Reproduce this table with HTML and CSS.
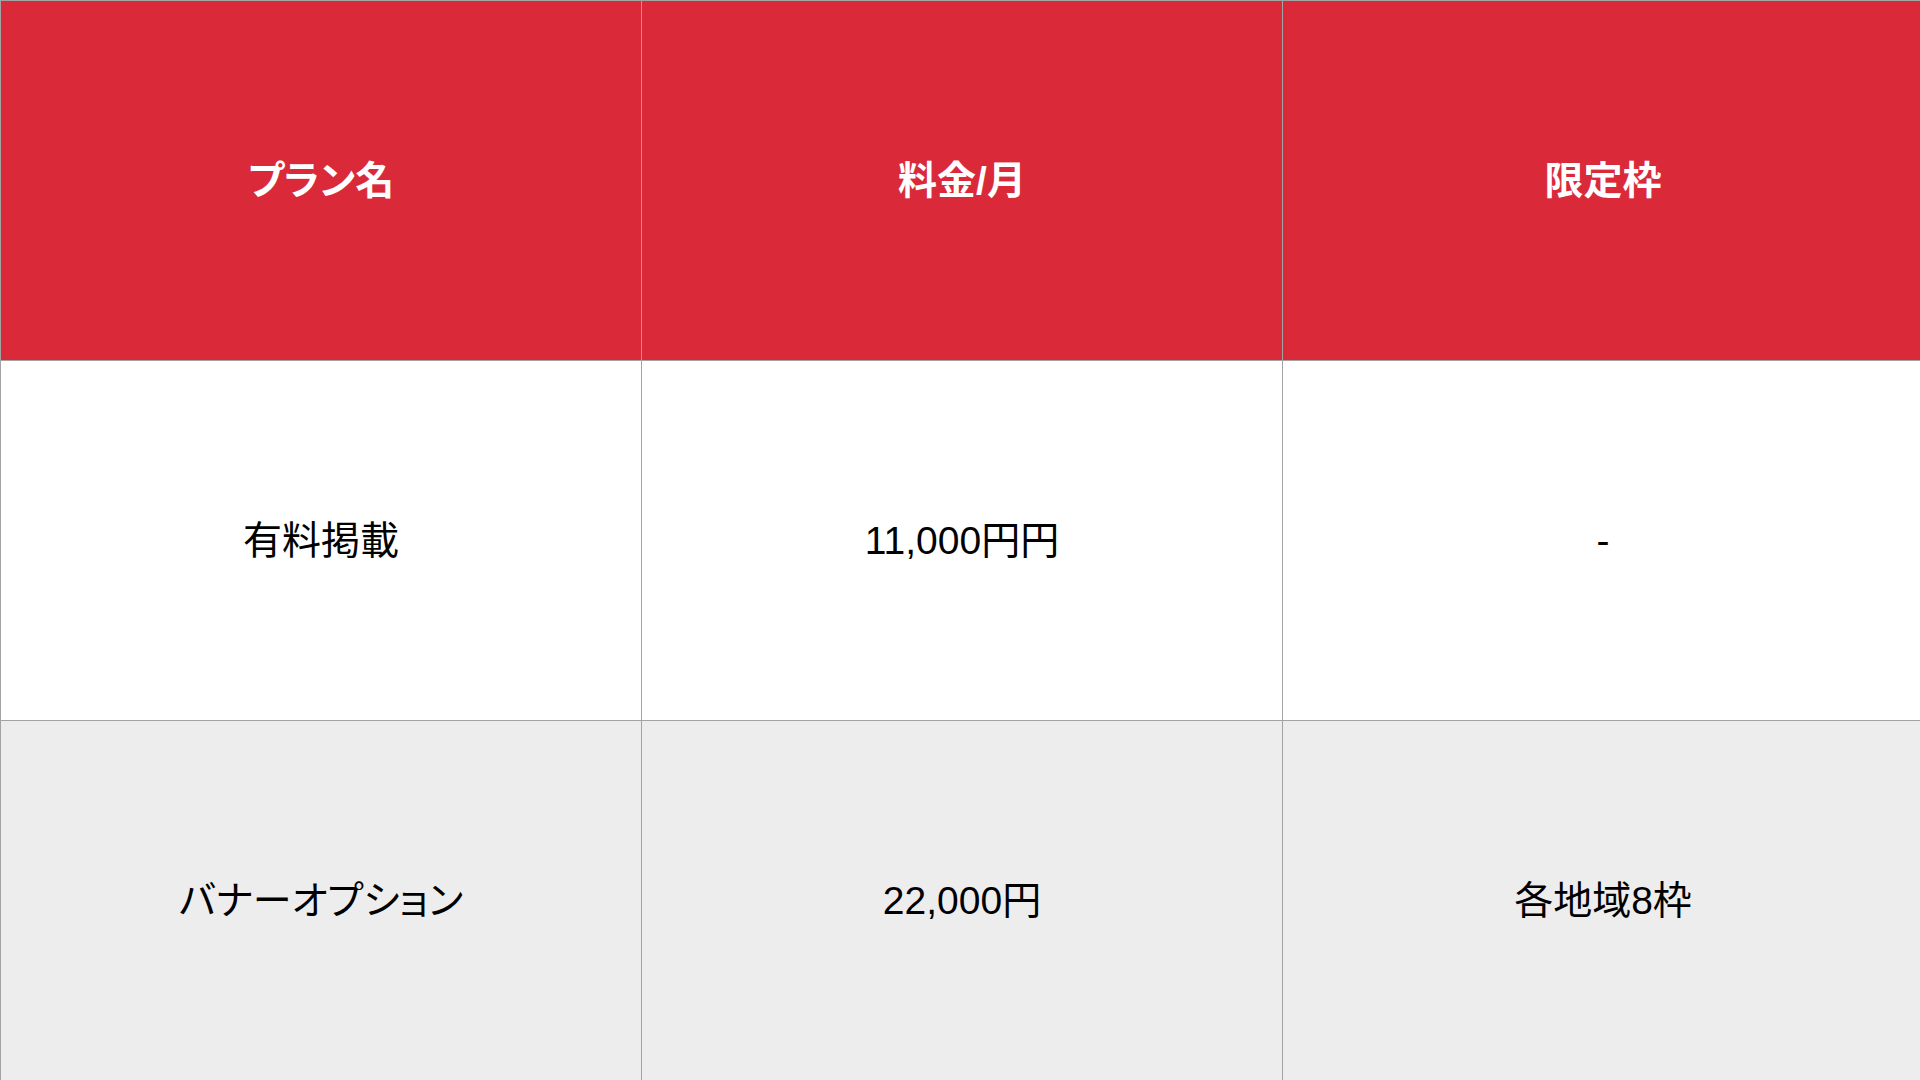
FILE: index.html
```html
<!DOCTYPE html>
<html lang="ja">
<head>
<meta charset="utf-8">
<link rel="stylesheet" href="styles.css">
</head>
<body>
<table class="plans">
  <thead>
    <tr class="head-row">
      <th>プラン名</th>
      <th>料金/月</th>
      <th>限定枠</th>
    </tr>
  </thead>
  <tbody>
    <tr class="row-white">
      <td>有料掲載</td>
      <td>11,000円円</td>
      <td>-</td>
    </tr>
    <tr class="row-gray">
      <td>バナーオプション</td>
      <td>22,000円</td>
      <td>各地域8枠</td>
    </tr>
  </tbody>
</table>
</body>
</html>
```
FILE: styles.css
```css
html, body {
  margin: 0;
  padding: 0;
  width: 1920px;
  height: 1080px;
  overflow: hidden;
  background: #ffffff;
}
.plans {
  width: 1920px;
  height: 1080px;
  border-collapse: collapse;
  table-layout: fixed;
  font-family: "Liberation Sans", "Noto Sans CJK JP", sans-serif;
  font-size: 39px;
  line-height: 1.2;
  color: #000000;
  font-feature-settings: "palt";
}
.plans th, .plans td {
  width: 640px;
  height: 357px;
  border: 1px solid #a3a3a3;
  text-align: center;
  vertical-align: middle;
  padding: 2px 0 0 0;
}
.head-row th {
  background: #da2a3a;
  color: #ffffff;
  font-weight: bold;
}
.row-white td {
  background: #ffffff;
}
.row-gray td {
  background: #ededed;
}
```
